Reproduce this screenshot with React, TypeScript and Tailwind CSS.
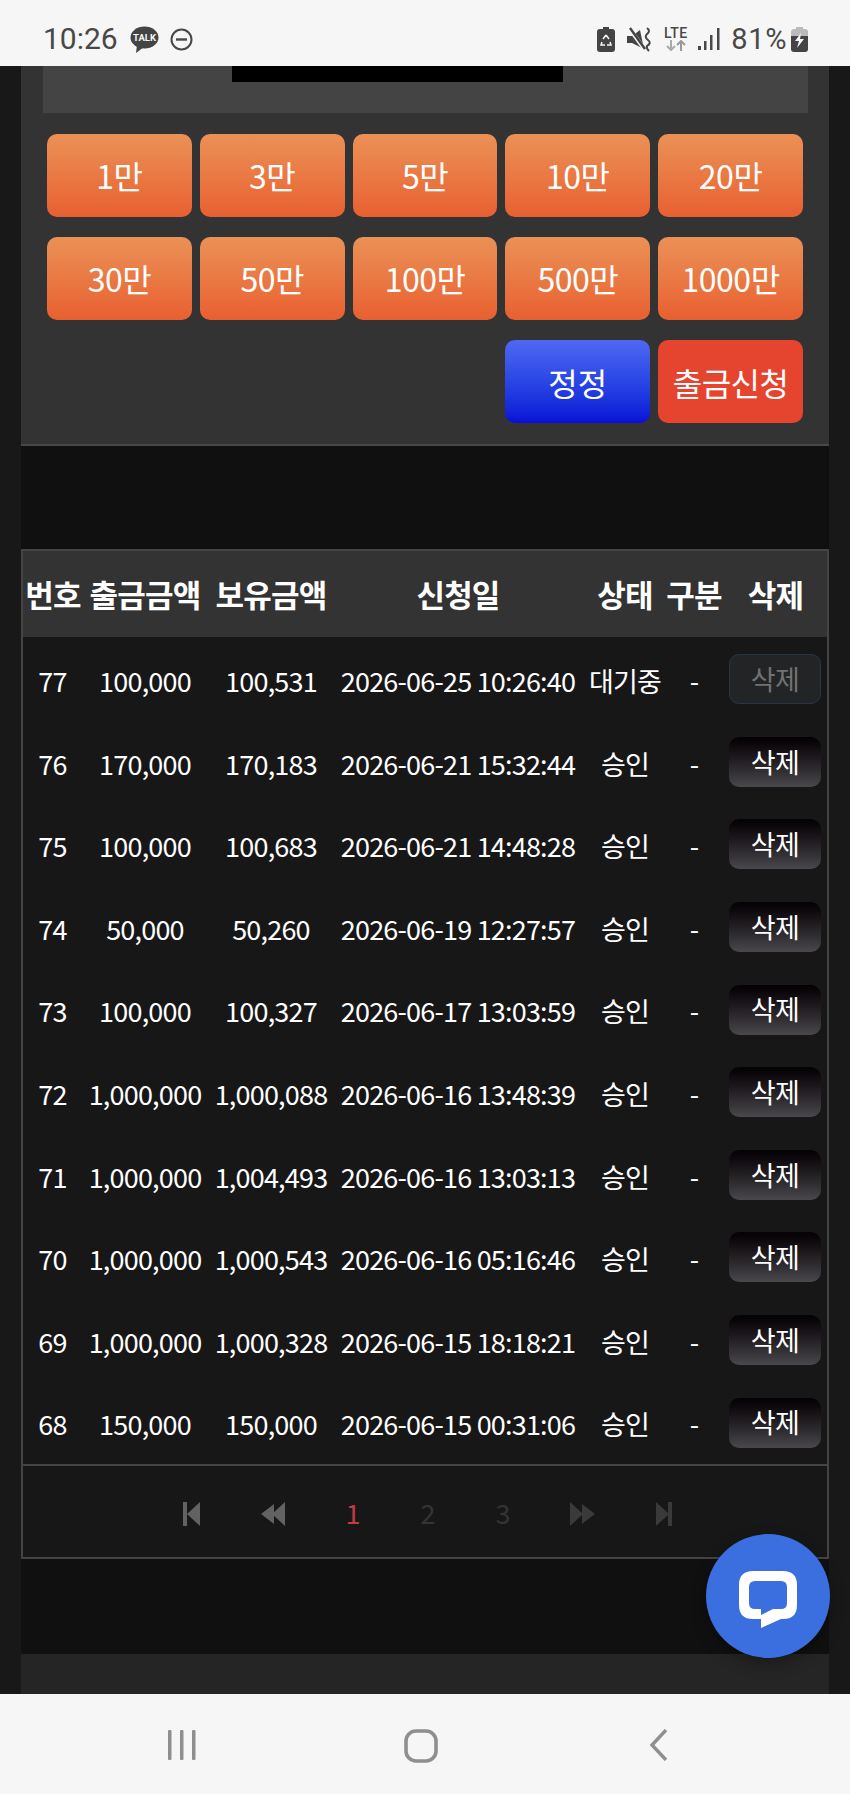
import React from "react";

const cjk = { fontFamily: '"Noto Sans CJK KR", "Noto Sans", sans-serif' };

const amounts = ["1만", "3만", "5만", "10만", "20만", "30만", "50만", "100만", "500만", "1000만"];

const rows = [
  ["77", "100,000", "100,531", "2026-06-25 10:26:40", "대기중"],
  ["76", "170,000", "170,183", "2026-06-21 15:32:44", "승인"],
  ["75", "100,000", "100,683", "2026-06-21 14:48:28", "승인"],
  ["74", "50,000", "50,260", "2026-06-19 12:27:57", "승인"],
  ["73", "100,000", "100,327", "2026-06-17 13:03:59", "승인"],
  ["72", "1,000,000", "1,000,088", "2026-06-16 13:48:39", "승인"],
  ["71", "1,000,000", "1,004,493", "2026-06-16 13:03:13", "승인"],
  ["70", "1,000,000", "1,000,543", "2026-06-16 05:16:46", "승인"],
  ["69", "1,000,000", "1,000,328", "2026-06-15 18:18:21", "승인"],
  ["68", "150,000", "150,000", "2026-06-15 00:31:06", "승인"],
];

const cols = "grid grid-cols-[60px_124px_128px_246px_88px_50px_108px] items-center text-center";

function StatusBar() {
  return (
    <div className="h-[66px] shrink-0 bg-[#f6f6f6] relative flex items-center text-[#484848] pt-[12px]">
      <div className="pl-[43px] flex items-center" style={{ fontFamily: "Roboto, sans-serif" }}>
        <span className="text-[30px] leading-none">10:26</span>
        <svg className="ml-[12px]" width="29" height="27" viewBox="0 0 29 27">
          <ellipse cx="14.5" cy="11.5" rx="14" ry="11" fill="#444" />
          <path d="M7 19 L6 27 L14 21 Z" fill="#444" />
          <text x="14.5" y="15" fontSize="9.5" fontWeight="700" textAnchor="middle" fill="#f6f6f6" fontFamily="Roboto, sans-serif">TALK</text>
        </svg>
        <svg className="ml-[11px]" width="23" height="23" viewBox="0 0 23 23" fill="none" stroke="#484848" strokeWidth="2">
          <circle cx="11.5" cy="11.5" r="10" />
          <path d="M6 11.5 H17" strokeWidth="2.4" />
        </svg>
      </div>
      <div className="ml-auto pr-[42px] flex items-center" style={{ fontFamily: "Roboto, sans-serif" }}>
        <svg width="18" height="25" viewBox="0 0 18 25">
          <path d="M6 0 H12 V2 H15 Q18 2 18 5 V22 Q18 25 15 25 H3 Q0 25 0 22 V5 Q0 2 3 2 H6 Z" fill="#444" />
          <path d="M9 8 L12 12 M9 8 L6 12 M5 15 L4 18 H8 M13 15 L14 18 H10" stroke="#f6f6f6" strokeWidth="1.5" fill="none" />
        </svg>
        <svg className="ml-[12px]" width="25" height="25" viewBox="0 0 25 25">
          <path d="M0 9 H5 L13 3 L17 22 L5 16 H0 Z" fill="#444" />
          <path d="M2 1 L18 23" stroke="#f6f6f6" strokeWidth="4" />
          <path d="M3 1 L18 22" stroke="#444" strokeWidth="2.4" />
          <path d="M20 1 Q24 4 20 7 Q17 10 21 13 Q25 16 20 19 Q19 21 22 24" fill="none" stroke="#444" strokeWidth="2" />
        </svg>
        <div className="ml-[11px] w-[25px] h-[26px] flex flex-col items-center">
          <span className="text-[14px] leading-[14px] font-medium tracking-[0.5px]">LTE</span>
          <svg width="20" height="11" viewBox="0 0 20 11" fill="none" strokeWidth="2">
            <path d="M5 0 V10 M1 6 L5 10 L9 6" stroke="#aaa" />
            <path d="M15 11 V1 M11 5 L15 1 L19 5" stroke="#999" />
          </svg>
        </div>
        <svg className="ml-[10px]" width="22" height="24" viewBox="0 0 22 24" fill="#484848">
          <rect x="0" y="19" width="3" height="4" />
          <rect x="6" y="14" width="2.5" height="9" />
          <rect x="12" y="8" width="2.5" height="15" />
          <rect x="19" y="1" width="2.5" height="22" />
        </svg>
        <span className="ml-[11px] text-[29px] leading-none tracking-[0.6px]">81%</span>
        <svg className="ml-[4px]" width="17" height="25" viewBox="0 0 17 25">
          <path d="M5 0 H12 V2 H14 Q17 2 17 5 V9 H0 V5 Q0 2 3 2 H5 Z" fill="#bbb" />
          <path d="M0 9 H17 V22 Q17 25 14 25 H3 Q0 25 0 22 Z" fill="#444" />
          <path d="M10 6 L4 14 H8 L6 21 L13 12 H9 Z" fill="#f6f6f6" />
        </svg>
      </div>
    </div>
  );
}

function AmountButton({ label }: { label: string }) {
  return (
    <button className="h-[83px] pb-[2px] rounded-[10px] bg-gradient-to-b from-[#ea9156] to-[#e85f30] text-white text-[32px] tracking-[-0.5px] flex items-center justify-center">
      {label}
    </button>
  );
}

function TopPanel() {
  return (
    <div className="h-[380px] shrink-0 bg-[#333333] border-b-2 border-[#484848] relative">
      <div className="ml-[22px] mr-[21px] h-[47px] bg-[#444444]">
        <div className="ml-[189px] w-[331px] h-[16px] bg-black" />
      </div>
      <div className="ml-[26px] mr-[26px] mt-[21px] grid grid-cols-5 gap-x-[8px] gap-y-[20px]">
        {amounts.map((a) => (
          <AmountButton key={a} label={a} />
        ))}
        <div className="col-span-3" />
        <button className="h-[83px] rounded-[10px] bg-gradient-to-b from-[#4f68f3] to-[#0c0bd6] text-white text-[32px] flex items-center justify-center">
          정정
        </button>
        <button className="h-[83px] rounded-[10px] bg-[#e5452f] text-white text-[32px] tracking-[-0.5px] flex items-center justify-center">
          출금신청
        </button>
      </div>
    </div>
  );
}

function DeleteButton({ disabled }: { disabled: boolean }) {
  if (disabled) {
    return (
      <button className="ml-[10px] mb-[4px] w-[92px] h-[50px] rounded-[10px] bg-[#222426] border border-[#2b3645] text-[#727272] text-[27px] tracking-[-0.5px] flex items-center justify-center">
        삭제
      </button>
    );
  }
  return (
    <button className="ml-[10px] mb-[4px] w-[92px] h-[50px] rounded-[10px] bg-gradient-to-b from-[#040204] to-[#4a484c] text-white text-[27px] tracking-[-0.5px] flex items-center justify-center">
      삭제
    </button>
  );
}

function Table() {
  return (
    <div className="border-x-2 border-t-2 border-[#444444] bg-[#181718] text-white">
      <div className={`${cols} h-[86px] bg-[#333333] text-[31px] font-bold tracking-[-0.8px]`}>
        {["번호", "출금금액", "보유금액", "신청일", "상태", "구분"].map((h) => (
          <div key={h} className="whitespace-nowrap flex justify-center">
            {h}
          </div>
        ))}
        <div className="whitespace-nowrap flex justify-center pl-[5px]">삭제</div>
      </div>
      <div className="h-[827px] pt-[3px]">
        {rows.map((r, i) => (
          <div key={r[0]} className={`${cols} h-[82.6px] text-[27px] tracking-[-0.8px]`}>
            <div className="pr-[1px]">{r[0]}</div>
            <div className="whitespace-nowrap">{r[1]}</div>
            <div className="whitespace-nowrap">{r[2]}</div>
            <div className="whitespace-nowrap">{r[3]}</div>
            <div className="whitespace-nowrap">{r[4]}</div>
            <div>-</div>
            <DeleteButton disabled={i === 0} />
          </div>
        ))}
      </div>
    </div>
  );
}

function Pagination() {
  return (
    <div className="h-[95px] pt-[4px] border-2 border-[#444444] bg-[#181718] relative flex items-center text-[27px]">
      <svg className="ml-[160px]" width="18" height="24" viewBox="0 0 18 24" fill="#626262">
        <rect x="0" y="0" width="4" height="24" />
        <path d="M17 0 V24 L4 12 Z" />
      </svg>
      <svg className="ml-[60px]" width="26" height="24" viewBox="0 0 26 24" fill="#626262">
        <path d="M13 2 V22 L0 12 Z" />
        <path d="M24 0 V24 L11 12 Z" />
      </svg>
      <span className="ml-[54px] w-[24px] text-center text-[#c23a45]">1</span>
      <span className="ml-[51px] w-[24px] text-center text-[#343434]">2</span>
      <span className="ml-[51px] w-[24px] text-center text-[#343434]">3</span>
      <svg className="ml-[55px]" width="25" height="24" viewBox="0 0 25 24" fill="#3a3a3a">
        <path d="M0 0 V24 L13 12 Z" />
        <path d="M12 2 V22 L25 12 Z" />
      </svg>
      <svg className="ml-[60px]" width="18" height="24" viewBox="0 0 18 24" fill="#3a3a3a">
        <path d="M1 0 V24 L14 12 Z" />
        <rect x="13" y="0" width="4" height="24" />
      </svg>
    </div>
  );
}

function NavBar() {
  return (
    <div className="h-[100px] shrink-0 bg-[#f6f6f6] relative flex items-start pt-[35px]">
      <svg className="ml-[166px]" width="32" height="32" viewBox="0 0 32 32" fill="#8f8f8f">
        <rect x="2" y="1" width="3.5" height="30" rx="1" />
        <rect x="14" y="1" width="3.5" height="30" rx="1" />
        <rect x="26" y="1" width="3.5" height="30" rx="1" />
      </svg>
      <svg className="ml-[206px]" width="34" height="34" viewBox="0 0 34 34" fill="none" stroke="#8f8f8f" strokeWidth="3.6">
        <rect x="2" y="2" width="30" height="30" rx="10" />
      </svg>
      <svg className="ml-[211px]" width="20" height="32" viewBox="0 0 20 32" fill="none" stroke="#8f8f8f" strokeWidth="3.4">
        <path d="M17 1 L3 16 L17 31" />
      </svg>
    </div>
  );
}

export default function App() {
  return (
    <div className="w-[850px] h-[1794px] overflow-hidden flex flex-col relative bg-[#181818]" style={cjk}>
      <StatusBar />
      <div className="h-[1628px] flex bg-[#181818]">
        <div className="w-[21px] shrink-0" />
        <div className="w-[808px] shrink-0 flex flex-col">
          <TopPanel />
          <div className="h-[103px] shrink-0 bg-[#101010]" />
          <Table />
          <Pagination />
          <div className="h-[95px] shrink-0 bg-[#101010]" />
          <div className="flex-1 bg-[#252525]" />
        </div>
      </div>
      <NavBar />
      <div className="absolute left-[706px] top-[1534px] w-[124px] h-[124px] rounded-full bg-[#3b6fe0] flex items-center justify-center shadow-[0_6px_16px_rgba(0,0,0,0.3)]">
        <svg className="mt-[6px]" width="58" height="57" viewBox="0 0 58 57">
          <path fillRule="evenodd" fill="#ffffff" d="M14 0 H44 Q58 0 58 14 V34 Q58 48 44 48 H42 L22 57 V48 H14 Q0 48 0 34 V14 Q0 0 14 0 Z M16 10 Q10 10 10 16 V32 Q10 38 16 38 H22 V44 L34 38 H42 Q48 38 48 32 V16 Q48 10 42 10 Z" />
        </svg>
      </div>
    </div>
  );
}
